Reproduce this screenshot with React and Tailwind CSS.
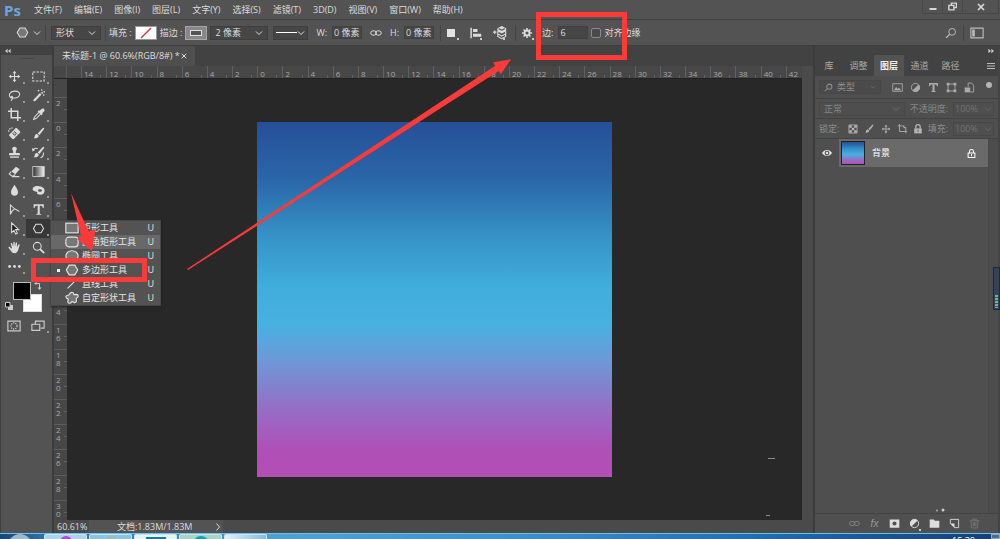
import React from "react";

const Svg = ({ size = "size-4", box = "0 0 16 16", children }) => (
  <svg viewBox={box} className={`${size} shrink-0`} fill="none" stroke="currentColor" strokeWidth="1.3" aria-hidden="true">
    {children}
  </svg>
);

const fill = { fill: "currentColor", stroke: "none" };

const MoveShape = () => (
  <>
    <path d="M8 3v10M3 8h10" />
    <path {...fill} d="M8 1l2.4 3H5.6zM8 15l2.4-3H5.6zM1 8l3-2.4v4.8zM15 8l-3-2.4v4.8z" />
  </>
);
const HexShape = () => <path d="M4.8 2.8h6.4L14.2 8l-3 5.2H4.8L1.8 8z" />;
const BrushShape = () => (
  <>
    <path {...fill} d="M14.6 1.2c.6.5.3 1.200-.2 1.900L9.200 9.800 7 8 13 1.600c.6-.6 1.100-.8 1.600-.4z" />
    <path {...fill} d="M6.200 8.700l2 1.700c.2 2.400-2.500 4.200-6.400 3.400 1.600-.7 1.300-1.500 1.700-3.200.4-1.300 1.500-2 2.700-1.900z" />
  </>
);
const SearchShape = () => (
  <>
    <circle cx="9.500" cy="6.500" r="4.500" />
    <path d="M6.300 9.800L1.500 14.500" strokeWidth="1.800" />
  </>
);
const LinkShape = () => (
  <>
    <rect x="1" y="5.200" width="7.500" height="5.600" rx="2.800" />
    <rect x="7.500" y="5.200" width="7.500" height="5.600" rx="2.800" />
  </>
);

const tools = [
  ["移动工具", <MoveShape />],
  ["矩形选框工具", <rect x="1" y="2.500" width="14" height="11" strokeDasharray="3 1.600" />],
  ["套索工具", <path d="M4 11.200C1.500 9.800.8 7 2.800 4.800c2.600-2.700 8.200-2.900 10.600-.6 2.200 2.300.6 5.600-3 6.500-2.300.6-4.700.5-6.200-.2-1.300-.8-.2-2.300 1-1.300 1.100 1.300.2 3.300-1.400 5.300" />],
  ["魔棒工具", <g {...fill}><path d="M9.800 4.800l1.900 1.900-7.600 8.100c-1.300 1.200-3.300-.8-2-2zM12.500 3.500l1.300 1.300-1.200 1.200L11 4.500z" /><circle cx="8" cy="2" r="1" /><circle cx="12" cy="1.300" r="1" /><circle cx="15" cy="3.500" r="1" /><circle cx="14.500" cy="7.500" r="1" /></g>],
  ["裁剪工具", <path strokeWidth="1.800" d="M4 0v12h12M0 4h12v12" />],
  ["吸管工具", <><path d="M8.500 5.500L3 11l-1 3 3-1 5.500-5.500" /><path {...fill} d="M14.800 1.200c1.100 1.200.8 2.600-.4 3.500L12.500 6.500l.7 1-1.400 1.400L7 4.200l1.400-1.400 1.100.6 1.800-1.800c1-1.100 2.400-1.400 3.500-.4z" /></>],
  ["污点修复画笔工具", <><path {...fill} d="M11.300 1.800l3.200 3.200c.8.8.8 1.600 0 2.400l-7 7c-.8.8-1.600.8-2.400 0l-3.200-3.200c-.8-.8-.8-1.600 0-2.400l7-7c.8-.8 1.600-.8 2.400 0z" /><path stroke="#535353" d="M4.700 6.800l4.800 4.800M7 4.500l4.800 4.800" strokeWidth=".9" /><path stroke="#535353" d="M7.200 7.200l.1.100M9 9l.1.100M9 7.100l.1.100M7.200 9l.1.100" strokeLinecap="round" /><path d="M1 6c-.5-3 2-5.500 6-4.500" strokeDasharray="2 1" /></>],
  ["画笔工具", <BrushShape />],
  ["仿制图章工具", <g {...fill}><path d="M8 .8c1.700 0 2.900 1.200 2.900 2.700 0 1.400-1.300 2.300-1.300 3.600v1.500h3.600c1 0 1.500.5 1.500 1.400v1.500H1.300V10c0-.9.500-1.400 1.500-1.400h3.600V7.100c0-1.300-1.300-2.200-1.300-3.600C5.100 2 6.300.8 8 .8z" /><path d="M2.500 12.800h11v1.700h-11z" /></g>],
  ["历史记录画笔工具", <><BrushShape /><path d="M1 4.800c2-2.500 4-2.500 6-1.500M14 8c.5 3-1 5.500-3.500 6.500" /><path {...fill} d="M0 2.500l.5 4.200L4 5z" /></>],
  ["橡皮擦工具", <><path {...fill} d="M9.800 2L14.500 5.300 9 11.500 4.200 8z" /><path d="M4 8.200L1.500 11l3 2.500h2.300L9 11.500M5 14.300h9" /></>],
  ["渐变工具", <><defs><linearGradient id="tool-gradient"><stop stopColor="#2e2e2e" /><stop offset="1" stopColor="#f2f2f2" /></linearGradient></defs><rect x="1" y="2" width="14" height="12" fill="url(#tool-gradient)" strokeWidth="1" /></>],
  ["模糊工具", <path {...fill} d="M8 1c2 3.400 4.300 5.800 4.300 9A4.300 4.300 0 018 14.600 4.300 4.300 0 013.700 10C3.700 6.800 6 4.400 8 1z" />],
  ["海绵工具", <><path {...fill} d="M4 2.800c4-1 8 0 10.200 2.200 2 2.300 1.600 5.300-.5 7.300-2 1.300-5.500 1-7.500-.3l.3-2.200C3.500 9.500.5 8.300.7 6.400.8 4.600 2.200 3.200 4 2.800z" /><ellipse cx="9.800" cy="8" rx="2.500" ry="1.600" fill="#535353" stroke="none" /></>],
  ["钢笔工具", <path d="M3 14V2.500c3 3.500 6.500 6 11 8M3 14c1.500-4 3-5.500 5-6.500" />],
  ["横排文字工具", <path {...fill} d="M2 1.500h12.500V6h-1.200c-.3-1.800-.8-2.700-2.300-2.700H9.500v9c0 .8.4 1.100 1.800 1.200v1H5.200v-1c1.400-.1 1.800-.4 1.800-1.200v-9H5.500C4 3.300 3.500 4.200 3.200 6H2z" />],
  ["路径选择工具", <path fill="#1d1d1d" d="M4.500 1v12l2.800-2.700 2.200 4.500 2-1-2.200-4.400h3.900z" />],
  ["多边形工具", <HexShape />],
  ["抓手工具", <path {...fill} d="M4.800 8.500L3.500 3.800c-.3-1.300 1.300-1.700 1.700-.4L6.500 7V2c0-1.300 1.700-1.300 1.800 0l.3 5 .9-4.600c.2-1.200 1.800-1 1.700.3L10.900 7.700 12.700 4.500c.6-1.200 2-.5 1.600.7l-1.900 6.300c-.7 2.300-1.900 3.500-4.200 3.500-2.700 0-3.600-1-4.700-3L.8 8.600c-.6-1.300.7-1.900 1.600-1l2.100 2z" />],
  ["缩放工具", <><circle cx="6.500" cy="6.500" r="4.800" /><path d="M10 10l5 5" strokeWidth="2.200" /></>],
  ["编辑工具栏", <g {...fill}><circle cx="2" cy="8" r="1.700" /><circle cx="8" cy="8" r="1.700" /><circle cx="14" cy="8" r="1.700" /></g>],
];

const shapeTools = [
  ["矩形工具", <rect x="1" y="2.500" width="14" height="11" fill="#777" />],
  ["圆角矩形工具", <rect x="1" y="2.500" width="14" height="11" rx="3.500" fill="#777" />],
  ["椭圆工具", <ellipse cx="8" cy="8" rx="7" ry="6" fill="#777" />],
  ["多边形工具", <path fill="#777" d="M4.800 2.500h6.400L14.500 8l-3.300 5.500H4.800L1.500 8z" />],
  ["直线工具", <path d="M3 13L13 3" />],
  ["自定形状工具", <path fill="#777" d="M5 4c1-3 4.500-3.500 5-.5.300 1.500 1 .5 3 .3 3 .2 2.500 3.200.3 4.200-1.500.8 0 1.500-.3 3.500-.7 2.500-3 2-4.300.7-1-.9-1.200 1.500-3.200 1.800-2.700.2-2.700-2.500-1.700-4C4.500 8.500 1 9 1 6.500 1 4 4 5.500 5 4z" />],
];

const ChevronDown = () => (
  <Svg size="size-2"><path d="M2 5l6 6 6-6" strokeWidth="2" /></Svg>
);

const Divider = () => <span className="h-4 w-px shrink-0 bg-[#444]" />;
const Corner = () => <span className="absolute right-0 bottom-0 size-[2px] bg-[#c8c8c8]" />;

function Picker({ label, value, width, dim }) {
  return (
    <div className={`grid h-[14px] shrink-0 items-center border ${dim ? "border-[#484848] bg-[#4e4e4e]" : "border-[#3e3e3e] bg-[#464646]"} ${width}`}>
      <select aria-label={label} className="col-start-1 row-start-1 h-full w-full appearance-none bg-transparent px-1 outline-none">
        <option>{value}</option>
      </select>
      <span className={`pointer-events-none col-start-1 row-start-1 justify-self-end pr-1 ${dim ? "text-[#6a6a6a]" : ""}`}><ChevronDown /></span>
    </div>
  );
}

function Field({ id, label, value }) {
  return (
    <div className="flex items-center gap-[5px]">
      <label htmlFor={id}>{label}</label>
      <input id={id} defaultValue={value} className="h-[13px] w-[30px] border border-[#414141] bg-[#464646] px-px text-[9px] outline-none" />
    </div>
  );
}

function PercentField({ id, label }) {
  return (
    <div className="flex items-center gap-[5px]">
      <label htmlFor={id} className="whitespace-nowrap">{label}</label>
      <div className="flex h-[14px] w-[41px] items-center border border-[#474747] pr-px">
        <input id={id} defaultValue="100%" className="w-full min-w-0 bg-transparent pl-px text-[9px] text-[#727272] outline-none" />
        <span className="text-[#666]"><ChevronDown /></span>
      </div>
    </div>
  );
}

function TitleBar() {
  const menus = ["文件(F)", "编辑(E)", "图像(I)", "图层(L)", "文字(Y)", "选择(S)", "滤镜(T)", "3D(D)", "视图(V)", "窗口(W)", "帮助(H)"];
  return (
    <header className="flex h-5 shrink-0 items-center border-b border-[#404040] pl-1">
      <span className="w-[30px] font-['Open_Sans',sans-serif] text-[15px] font-bold text-[#6ba7dc]">Ps</span>
      <nav className="flex gap-3">
        {menus.map((m) => <button key={m} type="button" className="whitespace-nowrap">{m}</button>)}
      </nav>
      <div className="mr-px ml-auto flex h-[14px] self-start border-b border-l border-[#484848] text-[#d6d6d6]">
        <button type="button" aria-label="最小化" className="flex w-5 items-center justify-center border-r border-[#484848]"><Svg size="size-2"><path d="M1 12h14" strokeWidth="4" /></Svg></button>
        <button type="button" aria-label="还原" className="flex w-5 items-center justify-center border-r border-[#484848]"><Svg size="size-[9px]"><path d="M6 5V2h9v8h-4M1.500 6h9v8h-9z" strokeWidth="2.500" /></Svg></button>
        <button type="button" aria-label="关闭" className="flex w-9 items-center justify-center border-r border-[#484848]"><Svg size="size-2"><path d="M2 2l12 12M14 2L2 14" strokeWidth="3.500" /></Svg></button>
      </div>
    </header>
  );
}

function OptionsBar() {
  const iconButton = "relative flex h-[14px] w-3 items-center";
  return (
    <div className="flex h-[26px] shrink-0 items-center border-b border-[#3e3e3e] pl-4">
      <button type="button" aria-label="工具预设" className="flex w-[29px] items-center gap-1">
        <Svg size="size-[13px]"><path fill="#777" d="M4.800 2.500h6.400L14.500 8l-3.300 5.500H4.800L1.500 8z" /></Svg>
        <ChevronDown />
      </button>
      <div className="flex items-center gap-[5px]">
        <Divider />
        <Picker label="工具模式" value="形状" width="w-[50px]" />
      </div>
      <div className="flex items-center gap-[3px] pl-1">
        <Divider />
        <span>填充 :</span>
        <button type="button" aria-label="填充颜色" className="h-[14px] w-[22px] border border-[#999] bg-white">
          <svg viewBox="0 0 20 12" className="size-full" aria-hidden="true"><path d="M5 11L15 1" stroke="#d23c46" strokeWidth="1.500" /></svg>
        </button>
        <span>描边 :</span>
        <button type="button" aria-label="描边颜色" className="flex h-[14px] w-[22px] items-center justify-center border border-[#a5a5a5] bg-[#888]">
          <span className="h-[6px] w-3 border border-[#ddd] bg-[#555]" />
        </button>
        <Picker label="描边宽度" value="2 像素" width="w-[58px]" />
      </div>
      <div className="ml-[5px] flex h-[14px] w-[35px] items-center justify-between border border-[#3e3e3e] bg-[#464646] px-[2px]">
        <span className="h-px w-[22px] bg-white" />
        <ChevronDown />
      </div>
      <div className="ml-2 flex items-center gap-2">
        <Field id="shape-w" label="W:" value="0 像素" />
        <button type="button" aria-label="链接宽高" className="flex"><Svg size="size-3"><LinkShape /></Svg></button>
        <Field id="shape-h" label="H:" value="0 像素" />
      </div>
      <div className="ml-[6px] flex items-center gap-[6px]">
        <Divider />
        <div className="flex gap-[11px] pr-1">
          <button type="button" aria-label="路径操作" className={iconButton}><span className="size-2 bg-[#e2e2e2]" /><Corner /></button>
          <button type="button" aria-label="路径对齐方式" className={iconButton}>
            <Svg size="size-3"><path d="M1.500 1v14" strokeWidth="2" /><path {...fill} d="M4 2.500h6v4H4zM4 9h11v4H4z" /></Svg><Corner />
          </button>
          <button type="button" aria-label="路径排列方式" className={iconButton}>
            <Svg size="size-[14px]"><path {...fill} d="M10 0l5 2.500V6l-5 2.500L5 6V2.500z" /><path d="M5.500 6v6l4.500 2.500 4.500-2.500V6M5.500 9l4.500 2.500L14.500 9M0 7h4M2 5v4" /><path d="M6.500 3L10 4.800 13.500 3" stroke="#535353" /></Svg><Corner />
          </button>
        </div>
        <Divider />
        <button type="button" aria-label="几何体选项" className={iconButton}>
          <Svg size="size-[10px]"><circle cx="8" cy="8" r="4" strokeWidth="3" /><path strokeWidth="2.500" d="M8 0v3M8 13v3M0 8h3M13 8h3M2.500 2.500l2 2M11.500 11.500l2 2M13.500 2.500l-2 2M4.500 11.500l-2 2" /></Svg><Corner />
        </button>
      </div>
      <div className="ml-2 flex items-center gap-[3px]">
        <Field id="sides" label="边:" value="6" />
        <input id="align-edges" type="checkbox" className="size-[10px] appearance-none rounded-[2px] border border-[#8a8a8a] bg-[#4a4a4a]" />
        <label htmlFor="align-edges">对齐边缘</label>
      </div>
      <div className="mr-4 ml-auto flex items-center gap-[6px] text-[#bababa]">
        <button type="button" aria-label="搜索" className="flex"><Svg size="size-3"><SearchShape /></Svg></button>
        <Divider />
        <button type="button" aria-label="选择工作区" className="flex"><Svg size="size-[14px]"><path d="M1 2.500h14v11H1z" /><path {...fill} d="M2.500 4h3v8h-3z" /></Svg></button>
      </div>
    </div>
  );
}

function ShapeMenu() {
  return (
    <div role="menu" className="absolute top-px left-full z-20 w-[111px] border border-[#474747] bg-[#535353] shadow-[1px_1px_2px_#222]">
      {shapeTools.map(([name, icon], i) => (
        <button key={name} type="button" role="menuitem" className={`flex h-[14px] w-full items-center pl-[6px] text-[#e4e4e4] ${i === 1 ? "bg-[#686868]" : ""}`}>
          <span className="w-2">{i === 3 && <span className="block size-[3px] bg-white" />}</span>
          <Svg size="size-[14px]">{icon}</Svg>
          <span className="pl-[3px] whitespace-nowrap">{name}</span>
          <span className="ml-auto pr-[6px]">U</span>
        </button>
      ))}
    </div>
  );
}

function ToolBox() {
  return (
    <aside className="flex w-[52px] shrink-0 flex-col border-l border-[#404040]">
      <div className="flex h-[9px] items-center bg-[#424242] pl-1 text-[#ccc]"><Svg size="size-[6px]"><path {...fill} d="M7 2v12L0 8zM15 2v12L8 8z" /></Svg></div>
      <div className="mx-auto mt-[3px] mb-2 h-px w-[14px] bg-[#484848]" />
      <div className="grid grid-cols-[24px_24px] pl-px text-[#dcdcdc]">
        {tools.map(([name, icon]) => {
          const active = name === "多边形工具";
          return (
            <div key={name} className="relative h-[19px]">
              <button type="button" aria-label={name} className={`relative flex h-full w-full items-center justify-center ${active ? "bg-[#383838]" : ""}`}>
                <Svg size="size-[13px]">{icon}</Svg>
                {name !== "缩放工具" && <span className="absolute right-px bottom-[2px] size-[2px] bg-[#999]" />}
              </button>
              {active && <ShapeMenu />}
            </div>
          );
        })}
      </div>
      <div className="mt-[6px] grid h-[34px] grid-cols-[12px_10px_8px_11px] grid-rows-[12px_6px_12px] text-[#ccc]">
        <button type="button" aria-label="背景色" className="col-start-3 col-end-5 row-start-2 row-end-4 border border-[#ddd] bg-white" />
        <button type="button" aria-label="前景色" className="z-[1] col-start-2 col-end-4 row-start-1 row-end-3 border border-[#bbb] bg-black" />
        <button type="button" aria-label="切换前景色和背景色" className="col-start-4 row-start-1 flex items-start justify-end"><Svg size="size-2"><path d="M2 3h9v10" strokeWidth="2" /><path {...fill} d="M0 3l5-3v6zM11 16l-4-5h8z" /></Svg></button>
        <button type="button" aria-label="默认颜色" className="col-start-1 row-start-3 flex items-center justify-end"><Svg size="size-2"><path {...fill} d="M6 6h10v10H6z" /><path fill="#000" strokeWidth="2" d="M1 1h9v9H1z" /></Svg></button>
      </div>
      <div className="grid grid-cols-[24px_24px] pl-px text-[#ccc]">
        <button type="button" aria-label="快速蒙版" className="flex h-[19px] items-center justify-center"><Svg size="size-[14px]"><path d="M1 2.500h14v11H1z" /><circle cx="8" cy="8" r="3.500" strokeDasharray="1.500 1" /></Svg></button>
        <button type="button" aria-label="屏幕模式" className="relative flex h-[19px] items-center justify-center"><Svg size="size-[14px]"><path d="M5 6V2.500h10v8h-4" /><path d="M1 6h9v7H1z" /></Svg><span className="absolute right-px bottom-[2px] size-[2px] bg-[#999]" /></button>
      </div>
    </aside>
  );
}

const range = (from, count) => Array.from({ length: count }, (_, i) => Math.abs(from + i * 2));

function TopRuler() {
  return (
    <div className="flex h-[13px] border-b border-[#222] bg-[#474747] text-[8px] leading-none text-[#a8a8a8]">
      <span className="w-[13px] shrink-0 border-r border-[#5a5a5a]" />
      <div className="flex-1 overflow-hidden pl-[14px]">
        <div className="grid h-full w-[730px] grid-cols-[repeat(29,minmax(0,1fr))]">
          {range(-14, 29).map((n, i) => (
            <span key={i} className="flex items-end justify-between border-l border-[#606060] pl-[2px]">
              <span>{n}</span>
              <span className="mr-[5px] h-[3px] w-px bg-[#606060]" />
            </span>
          ))}
        </div>
      </div>
    </div>
  );
}

function SideRuler() {
  return (
    <div className="w-[13px] shrink-0 overflow-hidden bg-[#474747] pt-[18px] text-[8px] leading-[8px] text-[#a8a8a8]">
      <div className="grid h-[428px] grid-rows-[repeat(17,minmax(0,1fr))]">
        {range(-2, 17).map((n, i) => (
          <span key={i} className="flex justify-between border-t border-[#5c5c5c] pt-px pl-[2px]">
            <span className="w-[5px] break-all">{n}</span>
            <span className="mt-[10px] h-px w-[3px] bg-[#606060]" />
          </span>
        ))}
      </div>
    </div>
  );
}

function DocumentArea() {
  return (
    <main className="flex min-w-0 flex-1 flex-col border-x-2 border-[#3c3c3c] bg-[#424242]">
      <div className="flex h-5 shrink-0">
        <div className="flex w-[141px] items-center justify-between bg-[#4f4f4f] px-2 text-[#dedede]">
          <span className="whitespace-nowrap">未标题-1 @ 60.6%(RGB/8#) *</span>
          <button type="button" aria-label="关闭文档"><Svg size="size-[6px]"><path d="M2 2l12 12M14 2L2 14" strokeWidth="2.500" /></Svg></button>
        </div>
      </div>
      <div className="flex min-h-0 flex-1">
        <div className="flex min-w-0 flex-1 flex-col">
          <TopRuler />
          <div className="flex min-h-0 flex-1">
            <SideRuler />
            <div className="flex min-w-0 flex-1 items-center justify-center bg-[#282828]">
              <div className="size-[355px] bg-[linear-gradient(180deg,#264f97_0%,#2a66a8_16%,#3794c8_33%,#40addc_46%,#47b1e1_57%,#6b9ad8_67%,#9370c6_80%,#b04fb6_93%,#b34fb5_100%)]" />
            </div>
          </div>
        </div>
        <div className="w-[11px] shrink-0 bg-[#4b4b4b]" />
      </div>
      <footer className="flex h-[13px] shrink-0 items-center bg-[#4a4a4a] text-[#dcdcdc]">
        <span className="w-[35px] pl-[3px]">60.61%</span>
        <span className="flex h-full w-[134px] items-center justify-between bg-[#535353] pr-px pl-7">
          文档:1.83M/1.83M
          <Svg size="size-2"><path d="M5 1l6 7-6 7" strokeWidth="2" /></Svg>
        </span>
      </footer>
    </main>
  );
}

const filterIcons = [
  ["像素图层", <><path d="M1 2.500h14v11H1z" /><path {...fill} d="M3 12l3-5 2 3 2-2 3 4z" /></>],
  ["调整图层", <><circle cx="8" cy="8" r="6" /><path {...fill} d="M12.500 3.500A6.300 6.300 0 013.500 12.500z" /></>],
  ["文字图层", <path {...fill} d="M1.500 1.500h13V6h-1.500c-.3-1.800-.8-2.500-2-2.500H9.500v9c0 .8.4 1.100 1.800 1.200v1H4.700v-1c1.400-.1 1.800-.4 1.800-1.200v-9H5c-1.200 0-1.700.7-2 2.500H1.500z" />],
  ["形状图层", <><path d="M3 3h10v10H3z" /><path {...fill} d="M1 1h4v4H1zM11 1h4v4h-4zM1 11h4v4H1zM11 11h4v4h-4z" /></>],
  ["智能对象", <><path d="M6 7V1.500h5L14 5v9.500H9" /><path {...fill} d="M1 8h8v7H1z" /></>],
];

const lockIcons = [
  ["锁定透明像素", <><path d="M1.500 1.500h13v13h-13z" /><path {...fill} d="M2 2h4v4H2zM10 2h4v4h-4zM6 6h4v4H6zM2 10h4v4H2zM10 10h4v4h-4z" /></>],
  ["锁定图像像素", <BrushShape />],
  ["锁定位置", <MoveShape />],
  ["防止自动嵌套", <path d="M4 0v12M1 3h8l5 4v8M4 12h12M11 2v4h4" />],
  ["锁定全部", <><path {...fill} d="M2 7h12v8H2z" /><path d="M4.500 7V4.500a3.500 3.500 0 017 0V7" strokeWidth="2" /><path d="M8 9v4" stroke="#535353" /></>],
];

const layerActions = [
  ["链接图层", <LinkShape />, "text-[#888]"],
  ["图层样式", null, "text-[#999]"],
  ["添加图层蒙版", <path {...fill} fillRule="evenodd" d="M1 2h14v12H1zM8 5a3 3 0 100 6 3 3 0 000-6z" />, "text-[#ddd]"],
  ["新建调整图层", <><circle cx="8" cy="8" r="6" /><path {...fill} d="M12.500 3.500A6.300 6.300 0 003.500 12.500z" /></>, "text-[#ddd]"],
  ["新建组", <path {...fill} d="M1 2h6l1.500 2H15v10H1z" />, "text-[#ddd]"],
  ["新建图层", <><path d="M2 2h12v12H8L2 8z" /><path {...fill} d="M2 8h6v6z" /></>, "text-[#ddd]"],
  ["删除图层", <path d="M1 4h14M5.500 4V1.500h5V4M3 4l.5 10.500h9L13 4M6 6v6M8 6v6M10 6v6" />, "text-[#777]"],
];

function LayersPanel() {
  const tabs = ["库", "调整", "图层", "通道", "路径"];
  return (
    <aside className="flex w-[185px] shrink-0 flex-col border-r-2 border-[#444] bg-[#4f4f4f]">
      <div className="flex h-[9px] items-center justify-end bg-[#424242] pr-1 text-[#ccc]"><Svg size="size-[6px]"><path {...fill} d="M1 2v12l7-6zM9 2v12l7-6z" /></Svg></div>
      <div className="flex h-[21px] shrink-0 items-center bg-[#424242]" role="tablist">
        {tabs.map((t) => (
          <button key={t} type="button" role="tab" aria-selected={t === "图层"} className={`h-full ${t === "库" ? "w-7 text-[#a8a8a8]" : t === "图层" ? "w-[30px] bg-[#535353] font-bold text-[#eee]" : "w-[31px] text-[#a8a8a8]"}`}>{t}</button>
        ))}
        <button type="button" aria-label="面板菜单" className="mr-[3px] ml-auto text-[#bbb]"><Svg size="size-2"><path d="M0 3h16M0 8h16M0 13h16" strokeWidth="2" /></Svg></button>
      </div>
      <div className="flex h-[23px] shrink-0 items-center border-b border-[#434343] pl-1 text-[#aaa]">
        <div className="flex h-[14px] w-[62px] items-center gap-1 border border-[#474747] bg-[#4a4a4a] px-1 text-[#8d8d8d]">
          <Svg size="size-[9px]"><g strokeWidth="1.800"><SearchShape /></g></Svg>
          <select aria-label="图层过滤类型" className="w-full appearance-none bg-transparent outline-none"><option>类型</option></select>
          <span className="text-[#6a6a6a]"><Svg size="size-[6px]"><path d="M2 5l6 6 6-6" strokeWidth="2" /></Svg></span>
        </div>
        <div className="ml-[11px] flex gap-[7px]">
          {filterIcons.map(([name, icon]) => <button key={name} type="button" aria-label={name} className="flex"><Svg size="size-[11px]">{icon}</Svg></button>)}
        </div>
        <button type="button" aria-label="过滤开关" className="mt-[6px] mr-[6px] ml-auto size-[6px] self-start rounded-full bg-[#b5b5b5]" />
      </div>
      <div className="flex h-5 shrink-0 items-center justify-between border-b border-[#434343] px-1 text-[#858585]">
        <Picker label="混合模式" value="正常" width="w-[86px]" dim />
        <PercentField id="opacity" label="不透明度:" />
      </div>
      <div className="flex h-5 shrink-0 items-center gap-[5px] border-b border-[#434343] px-1 text-[#8d8d8d]">
        <span>锁定:</span>
        <div className="flex flex-1 justify-between pl-1 text-[#b5b5b5]">
          {lockIcons.map(([name, icon]) => <button key={name} type="button" aria-label={name} className="flex"><Svg size="size-[10px]">{icon}</Svg></button>)}
        </div>
        <PercentField id="fill-opacity" label="填充:" />
      </div>
      <div className="flex min-h-0 flex-1 border-b border-[#434343]">
        <div className="flex flex-1 flex-col">
          <div className="flex h-7 items-center">
            <button type="button" aria-label="显示图层" className="flex w-6 justify-center text-[#e5e5e5]"><Svg size="size-[10px]"><path {...fill} fillRule="evenodd" d="M0 8c4-6.500 12-6.500 16 0-4 6.500-12 6.500-16 0zM8 4.200a3.800 3.800 0 100 7.600 3.800 3.800 0 000-7.600z" /><circle cx="8" cy="8" r="2" {...fill} /></Svg></button>
            <div className="flex h-full flex-1 items-center bg-[#6a6a6a] pr-3 pl-[2px] text-white">
              <span className="size-6 border border-[#222] bg-[linear-gradient(180deg,#264f97,#3794c8_33%,#47b1e1_57%,#9370c6_80%,#b34fb5)]" />
              <span className="pl-[7px]">背景</span>
              <span className="ml-auto"><Svg size="size-[9px]"><path d="M2 7h12v8H2zM4.500 7V4.500a3.500 3.500 0 017 0V7M8 9v4" strokeWidth="1.800" /></Svg></span>
            </div>
          </div>
        </div>
        <div className="w-[10px] border-l border-[#484848] bg-[#4c4c4c]" />
      </div>
      <div className="flex h-[19px] shrink-0 items-center justify-end gap-[9px] bg-[#505050] pr-[18px]">
        {layerActions.map(([name, icon, tone]) => (
          <button key={name} type="button" aria-label={name} className={`relative flex w-[11px] justify-center ${tone}`}>
            {icon ? <Svg size="size-[11px]">{icon}</Svg> : <span className="font-['Liberation_Sans',sans-serif] text-[10px] leading-none italic">fx</span>}
            {name === "新建调整图层" && <span className="absolute top-full -right-px size-[2px] bg-[#ccc]" />}
          </button>
        ))}
      </div>
    </aside>
  );
}

function TaskBar() {
  const box = "h-full w-[43px] overflow-hidden rounded-t-xs border border-b-0 border-[#c9e6f5]";
  return (
    <div className="flex h-[6px] shrink-0 items-start overflow-hidden border-t border-[#6cc0ee] bg-[linear-gradient(90deg,#124a7c_0%,#2a6fa5_4%,#4ba3d8_28%,#3c93cd_50%,#1f6fb4_75%,#123f78_100%)]">
      <button type="button" aria-label="开始" className="ml-2 h-6 w-6 rounded-full bg-[#9fb9cc]" />
      <div className="ml-3 flex h-full gap-[2px]">
        <button type="button" aria-label="应用一" className={`${box} flex justify-center bg-[#a9d4ec]`}><span className="mt-px size-3 rounded-full bg-[#c63df0]" /></button>
        <button type="button" aria-label="应用二" className={`${box} flex justify-center bg-[#88c4e4]`}><span className="mt-[2px] size-4 rounded-full bg-[#b9b48c]" /></button>
        <button type="button" aria-label="Photoshop" className={`${box} flex justify-center bg-[#e4f4fb]`}><span className="mt-[2px] h-3 w-5 bg-[#0d7f9c]" /></button>
        <button type="button" aria-label="浏览器" className={`${box} flex justify-center bg-[#a5d5c5]`}><span className="mt-px size-4 rounded-full bg-[#08a3bd]" /></button>
        <button type="button" aria-label="应用三" className={`${box} bg-[linear-gradient(90deg,#e4f1f8,#7fbde0)]`} />
      </div>
      <span className="mr-4 ml-auto pt-[2px] text-[9px] leading-none text-white">15:30</span>
      <button type="button" aria-label="显示桌面" className="h-full w-[9px] border border-[#8fa9bf] bg-[#4b6d8d]" />
    </div>
  );
}

function Annotations() {
  return (
    <svg className="pointer-events-none absolute top-0 left-0 z-30 h-[539px] w-[1000px]" viewBox="0 0 1000 539" fill="#fb3b3a" aria-hidden="true">
      <rect x="538.500" y="14.500" width="86" height="43" fill="none" stroke="#fb3b3a" strokeWidth="5" />
      <rect x="33.500" y="260.500" width="111" height="19" fill="none" stroke="#fb3b3a" strokeWidth="5" />
      <path d="M187 269L495 66l-1.700-3.700L511 59.300 501 74l-2.300-3L188 270z" />
      <path d="M71 193L88.500 231l7-1.500L92 251 77 239l4-2.500z" />
      <path d="M768 458h7v1h-7zM766 515h4v1h-4z" fill="#8c8c8c" />
      <circle cx="943" cy="510" r="1.500" fill="#ccc" /><circle cx="937" cy="510.500" r="1" fill="#aaa" />
    </svg>
  );
}

export default function App() {
  return (
    <div className="relative flex h-screen flex-col overflow-hidden bg-[#535353] font-['Open_Sans','Noto_Sans_CJK_SC',sans-serif] text-[9px] leading-3 text-[#dcdcdc]">
      <TitleBar />
      <OptionsBar />
      <div className="flex min-h-0 flex-1">
        <ToolBox />
        <DocumentArea />
        <LayersPanel />
      </div>
      <TaskBar />
      <div className="absolute top-[267px] right-0 z-10 flex h-[43px] w-[7px] items-end border border-[#1d2740] bg-[#36415a] p-px">
        <span className="h-[13px] w-full bg-[repeating-linear-gradient(180deg,#55c08c_0px,#55c08c_2px,#2d5f58_2px,#2d5f58_3px)]" />
      </div>
      <Annotations />
    </div>
  );
}
